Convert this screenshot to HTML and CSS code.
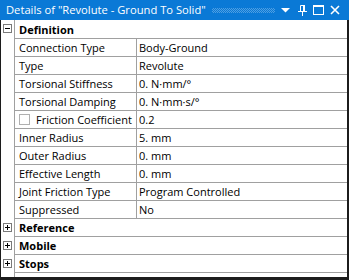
FILE: index.html
```html
<!DOCTYPE html>
<html lang="en">
<head>
  <meta charset="UTF-8">
  <title>Details</title>
  <link rel="stylesheet" href="styles.css">
</head>
<body>
  <div class="panel">
    <div class="titlebar">
      <span class="title">Details of "Revolute - Ground To Solid"</span>
      <span class="grip"></span>
      <svg class="ico-drop" width="9" height="5" viewBox="0 0 9 5"><polygon points="0,0 9,0 4.5,4.5" fill="#fff"/></svg>
      <svg class="ico-pin" width="9" height="11" viewBox="0 0 9 11">
        <path d="M2.5 0.5 H6.5 V6.5 H2.5 Z" fill="none" stroke="#fff"/>
        <rect x="5" y="0" width="2" height="7" fill="#fff"/>
        <rect x="0" y="6" width="9" height="1" fill="#fff"/>
        <rect x="4" y="7" width="1" height="4" fill="#fff"/>
      </svg>
      <svg class="ico-max" width="11" height="10" viewBox="0 0 11 10">
        <rect x="0.5" y="0.5" width="10" height="9" fill="none" stroke="#fff"/>
        <rect x="0" y="0" width="11" height="2" fill="#fff"/>
      </svg>
      <svg class="ico-close" width="10" height="10" viewBox="0 0 10 10">
        <path d="M1 1 L9 9 M9 1 L1 9" stroke="#fff" stroke-width="1.6"/>
      </svg>
    </div>

    <div class="body">
      <div class="row group first">
        <div class="gut">
          <svg class="exp" width="9" height="9" viewBox="0 0 9 9"><rect x="0.5" y="0.5" width="8" height="8" fill="#fff" stroke="#7a7a7a"/><rect x="2" y="4" width="5" height="1" fill="#000"/></svg>
        </div>
        <div class="gname">Definition</div>
      </div>
      <div class="row"><div class="gut"></div><div class="label">Connection Type</div><div class="value">Body-Ground</div></div>
      <div class="row"><div class="gut"></div><div class="label">Type</div><div class="value">Revolute</div></div>
      <div class="row"><div class="gut"></div><div class="label">Torsional Stiffness</div><div class="value">0. N·mm/°</div></div>
      <div class="row"><div class="gut"></div><div class="label">Torsional Damping</div><div class="value">0. N·mm·s/°</div></div>
      <div class="row"><div class="gut"></div><div class="label"><span class="check"></span>Friction Coefficient</div><div class="value">0.2</div></div>
      <div class="row"><div class="gut"></div><div class="label">Inner Radius</div><div class="value">5. mm</div></div>
      <div class="row"><div class="gut"></div><div class="label">Outer Radius</div><div class="value">0. mm</div></div>
      <div class="row"><div class="gut"></div><div class="label">Effective Length</div><div class="value">0. mm</div></div>
      <div class="row"><div class="gut"></div><div class="label">Joint Friction Type</div><div class="value">Program Controlled</div></div>
      <div class="row"><div class="gut"></div><div class="label">Suppressed</div><div class="value">No</div></div>
      <div class="row group">
        <div class="gut">
          <svg class="exp" width="9" height="9" viewBox="0 0 9 9"><rect x="0.5" y="0.5" width="8" height="8" fill="#fff" stroke="#7a7a7a"/><rect x="2" y="4" width="5" height="1" fill="#000"/><rect x="4" y="2" width="1" height="5" fill="#000"/></svg>
        </div>
        <div class="gname">Reference</div>
      </div>
      <div class="row group">
        <div class="gut">
          <svg class="exp" width="9" height="9" viewBox="0 0 9 9"><rect x="0.5" y="0.5" width="8" height="8" fill="#fff" stroke="#7a7a7a"/><rect x="2" y="4" width="5" height="1" fill="#000"/><rect x="4" y="2" width="1" height="5" fill="#000"/></svg>
        </div>
        <div class="gname">Mobile</div>
      </div>
      <div class="row group">
        <div class="gut">
          <svg class="exp" width="9" height="9" viewBox="0 0 9 9"><rect x="0.5" y="0.5" width="8" height="8" fill="#fff" stroke="#7a7a7a"/><rect x="2" y="4" width="5" height="1" fill="#000"/><rect x="4" y="2" width="1" height="5" fill="#000"/></svg>
        </div>
        <div class="gname">Stops</div>
      </div>
      <div class="filler"><div class="gut"></div></div>
    </div>
  </div>
</body>
</html>
```

FILE: styles.css
```css
body {
  margin: 0;
  font-family: "Open Sans", "Noto Sans", sans-serif;
  font-size: 11px;
  color: #000;
  background: #fff;
}
.panel {
  width: 349px;
  height: 280px;
  display: flex;
  flex-direction: column;
}
.titlebar {
  height: 20px;
  background: #0a79d6;
  color: #fff;
  display: flex;
  align-items: center;
  padding-left: 6px;
  font-size: 11.2px;
  white-space: nowrap;
}
.title { line-height: 20px; }
.grip {
  flex: 1;
  height: 5px;
  margin: 1px 6px 0 6px;
  background: repeating-conic-gradient(#4f9fe2 0 25%, transparent 0 50%) 0 0 / 2px 2px;
}
.ico-drop { margin: 1px 8px 0 0; }
.ico-pin { margin-right: 6px; }
.ico-max { margin-right: 6px; }
.ico-close { margin-right: 9px; }

.body {
  flex: 1;
  display: flex;
  flex-direction: column;
  border-left: 1px solid #1c1c1c;
  border-right: 2px solid #1c1c1c;
  border-bottom: 3px solid #1c1c1c;
}
.row {
  display: grid;
  grid-template-columns: 14px 122px 1fr;
  height: 18px;
}
.row.first { height: 19px; }
.gut {
  border-right: 1px solid #a0a0a0;
  position: relative;
}
.label, .value, .gname {
  border-bottom: 1px solid #a0a0a0;
  display: flex;
  align-items: center;
  white-space: nowrap;
}
.label {
  border-right: 1px solid #a0a0a0;
  padding-left: 4px;
}
.value { padding-left: 2px; }
.gname {
  grid-column: 2 / 4;
  padding-left: 4px;
  font-weight: bold;
}
.exp {
  position: absolute;
  left: 2px;
  top: 4px;
}
.check {
  width: 9px;
  height: 9px;
  border: 1px solid #b0b0b0;
  margin-right: 6px;
}
.filler {
  flex: 1;
  display: grid;
  grid-template-columns: 14px 1fr;
}
```
